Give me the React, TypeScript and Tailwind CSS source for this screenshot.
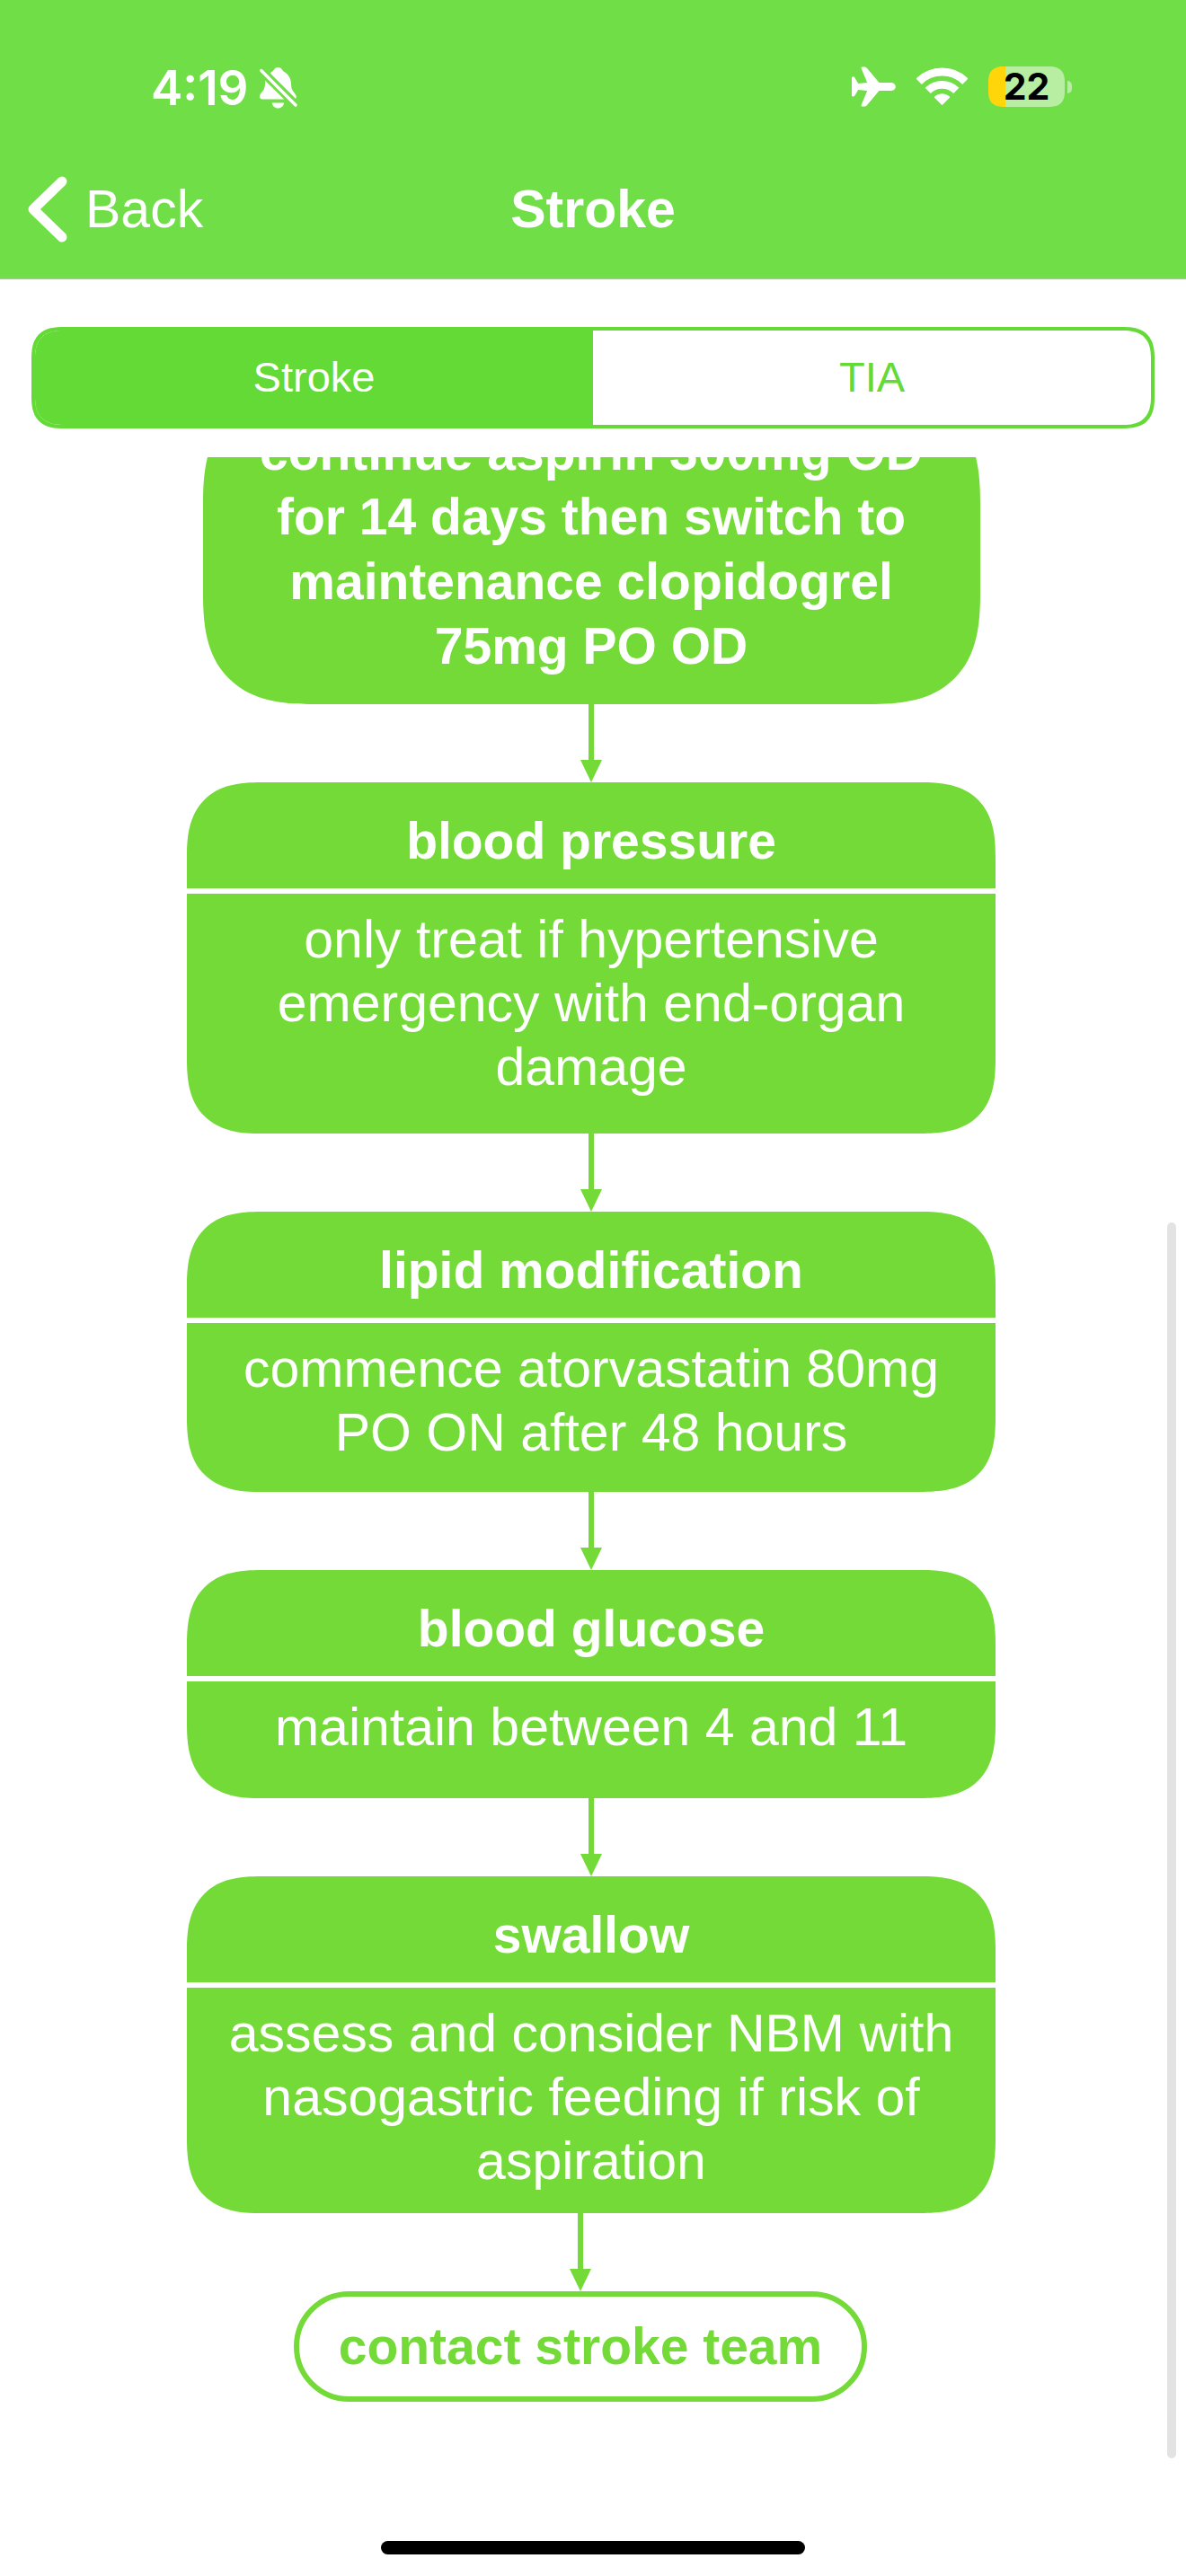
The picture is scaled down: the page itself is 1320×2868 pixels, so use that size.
import React from "react";

type Step = { title: string; body: string; pad: string };

const steps: Step[] = [
  {
    title: "blood pressure",
    body: "only treat if hypertensive emergency with end-organ damage",
    pad: "pb-[38px]",
  },
  {
    title: "lipid modification",
    body: "commence atorvastatin 80mg PO ON after 48 hours",
    pad: "pb-[30px]",
  },
  { title: "blood glucose", body: "maintain between 4 and 11", pad: "pb-[43px]" },
  {
    title: "swallow",
    body: "assess and consider NBM with nasogastric feeding if risk of aspiration",
    pad: "pb-[22px]",
  },
];

function Arrow() {
  return (
    <svg width="24" height="87" viewBox="0 0 24 87" fill="#73da37" className="block shrink-0" aria-hidden="true">
      <path d="M9 0h6v62h9L12 87 0 62h9z" />
    </svg>
  );
}

function BellOff() {
  return (
    <svg width="42" height="46" viewBox="0 0 42 46" fill="#fff" aria-hidden="true">
      <path d="M11.700 6.500c1.600-1.400 2.800-1.800 3.800-3.200C16.500 1.200 18.300 0 20.500 0s4 1.200 5 3.300c1 1.500 2.600 1.800 4.500 3.700 3.700 3.600 4.800 7 5 11.500.2 4.500.9 6.500 2.700 8.700 2.300 2.800 3.300 4.300 3 6.300-.1.600-.3 1-.7 1.300z" />
      <path d="M6.200 14.700 27.300 35.500H3c-2 0-3-1.100-3-2.700 0-2.200 1-3.600 2.900-5.700 2.500-2.700 3.200-6.200 3.300-12.400z" />
      <path d="M13.700 39.500h13.400c-.4 3.600-3.200 6-6.700 6s-6.300-2.400-6.700-6z" />
      <path d="M1.800 3.500 40 42" stroke="#fff" strokeWidth="3.400" strokeLinecap="round" />
    </svg>
  );
}

function Airplane() {
  return (
    <svg width="49" height="45" viewBox="0 0 49 45" fill="#fff" aria-hidden="true">
      <path d="M30.500 18H43c3.700 0 5.800 2 5.800 4.500S46.700 27 43 27H30.500L16.800 43.200c-.9 1.100-1.600 1.400-2.800 1.400h-2.200c-1.100 0-1.600-.8-1.200-1.800L17.200 27l-10-.9-3.700 6.200c-.5.800-1 1.100-1.900 1.100H1c-.7 0-1-.4-1-1.100V12.700c0-.7.300-1.100 1-1.100h.6c.9 0 1.400.3 1.900 1.100l3.700 6.200 10-.9L10.600 2.200C10.200 1.100 10.700.4 11.800.4H14c1.200 0 1.900.3 2.800 1.400z" />
    </svg>
  );
}

function Wifi() {
  return (
    <svg width="57" height="43" viewBox="0 0 57 43" fill="none" stroke="#fff" aria-hidden="true">
      <path d="M2.700 15.700a36.700 36.700 0 0 1 51.600 0" strokeWidth="9" />
      <path d="M12.700 25.900a22.400 22.400 0 0 1 31.600 0" strokeWidth="8.600" />
      <path d="M27.800 41.600 20.100 33.800q-.7-.8.200-1.500a12.600 12.600 0 0 1 16.400 0q.9.700.2 1.500l-7.700 7.800q-.7.600-1.400 0z" fill="#fff" stroke="none" />
    </svg>
  );
}

function StatusBar() {
  return (
    <div className="flex h-[100px] items-start justify-between pl-[168px] pr-[127px]">
      <div className="flex items-center gap-3">
        <span className="font-[Inter] text-[53px] leading-[48px] font-semibold text-white">4:19</span>
        <BellOff />
      </div>
      <div className="flex items-center gap-[23px]">
        <Airplane />
        <Wifi />
        <div className="flex items-center gap-[3px]">
          <div className="flex h-[45px] w-[85px] items-center justify-center rounded-[18px] bg-[linear-gradient(to_right,#ffd60a_19px,#b7eea2_19px)] [corner-shape:superellipse(1.4)]">
            <span className="font-[Inter] text-[41px] leading-[45px] font-bold text-black">22</span>
          </div>
          <div className="h-[14px] w-[5px] rounded-r-full bg-[#b7eea2]" />
        </div>
      </div>
    </div>
  );
}

function StepCard({ title, body, pad }: Step) {
  return (
    <section className="flex w-full flex-col gap-[6px] overflow-hidden rounded-[84px] text-center text-white [corner-shape:superellipse(1.4)]">
      <h2 className="bg-[#73da37] px-10 pt-[30px] pb-[17px] text-[57px] leading-[71px] font-bold">{title}</h2>
      <p className={`bg-[#73da37] px-9 pt-4 text-[59px] leading-[71px] ${pad}`}>{body}</p>
    </section>
  );
}

export default function App() {
  return (
    <div className="flex min-h-screen flex-col bg-white font-['Liberation_Sans',Arial,sans-serif]">
      <header className="border-b border-[#a9c79c] bg-[#70de46] pt-[74px]">
        <StatusBar />
        <nav className="grid h-[136px] grid-cols-[1fr_auto_1fr] items-start px-[30px] pt-5">
          <button type="button" className="flex items-center gap-5 text-[59px] leading-[78px] text-white">
            <svg width="45" height="74" viewBox="0 0 45 74" fill="none" stroke="#fff" strokeWidth="11" strokeLinecap="round" strokeLinejoin="round" aria-hidden="true">
              <path d="M39 6 7 37l32 31" />
            </svg>
            Back
          </button>
          <h1 className="text-[59px] leading-[78px] font-bold text-white">Stroke</h1>
        </nav>
      </header>

      <main className="flex flex-1 flex-col">
        <div
          role="tablist"
          aria-label="Pathway"
          className="mx-[35px] mt-[53px] mb-8 grid h-[113px] shrink-0 grid-cols-2 overflow-hidden rounded-[36px] border-[4px] border-[#63da36] text-[47px] [corner-shape:superellipse(1.4)]"
        >
          <button type="button" role="tab" aria-selected="true" className="bg-[#63da36] text-white">
            Stroke
          </button>
          <button type="button" role="tab" aria-selected="false" className="text-[#63da36]">
            TIA
          </button>
        </div>

        <div className="relative flex-1 overflow-hidden pr-1">
          <div className="mx-auto -mt-[72px] flex w-full max-w-[900px] flex-col items-center">
            <p className="w-full max-w-[865px] rounded-[124px] bg-[#73da37] px-12 pt-[30px] pb-[29px] text-center text-[57px] leading-[72px] font-bold text-white [corner-shape:superellipse(1.4)]">
              continue aspirin 300mg OD for 14 days then switch to maintenance clopidogrel 75mg PO OD
            </p>
            {steps.map((step) => (
              <React.Fragment key={step.title}>
                <Arrow />
                <StepCard {...step} />
              </React.Fragment>
            ))}
            <div className="flex flex-col items-center pr-6">
              <Arrow />
              <button type="button" className="rounded-full border-[6px] border-[#73da37] px-11 pt-5 pb-5 text-[57px] leading-[71px] font-bold text-[#73da37]">
                contact stroke team
              </button>
            </div>
          </div>
          <div className="absolute right-[11px] bottom-[131px] h-[1376px] w-[10px] rounded-full bg-[#e3e3e3]" />
          <div className="absolute bottom-6 left-1/2 h-[15px] w-[472px] -translate-x-1/2 rounded-full bg-black" />
        </div>
      </main>
    </div>
  );
}
